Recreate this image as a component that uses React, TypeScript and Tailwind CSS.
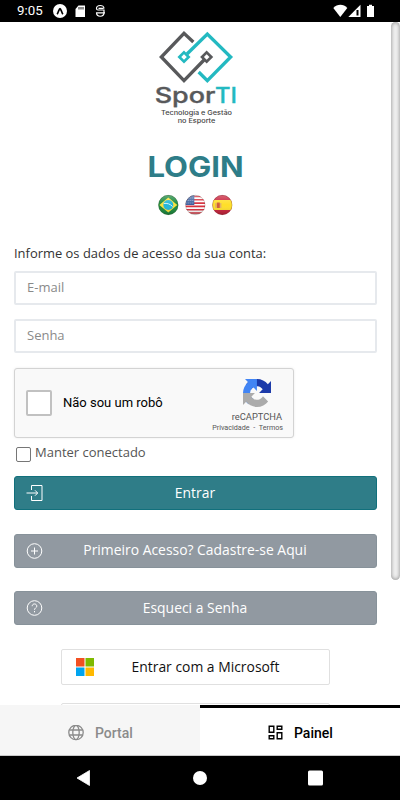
import React from 'react';

const StatusBar: React.FC = () => (
  <header className="flex h-[22px] shrink-0 items-center bg-black pl-[17px] text-white">
    <span className="w-[36px] font-[Roboto] text-[13.300px] leading-none">9:05</span>
    <svg className="h-[22px] w-[54px]" viewBox="0 0 54 22">
      <circle cx="7" cy="11" r="7" fill="#fff" />
      <path d="M4 14.2c1.300-1 2-5.700 3-5.700s1.700 4.700 3 5.700" fill="none" stroke="#000" strokeWidth="1.700" />
      <path d="M25.500 5.500H32V17h-9.500V9z" fill="#fff" />
      <path d="M26 7v2.500M28 7v2.500M30 7v2.500" stroke="#000" strokeWidth="0.900" />
      <path d="M51 8.500c0-4-7.500-4-7.500 0 0 1 .5 1.500 1.500 1.500h6v2.500c0 5-7.500 5-7.500 0M43 12.800h9M45.500 8.300h5" fill="none" stroke="#fff" strokeWidth="1.200" />
    </svg>
    <svg className="ml-auto h-[22px] w-[67px]" viewBox="0 0 67 22">
      <path d="M0.300 8c4-4.300 10.200-4.300 14 0L7.300 17z" fill="#fff" />
      <path d="M27.500 4.800V17H15.300z" fill="#fff" />
      <path d="M23.500 10h2v5.500h-2z" fill="#000" />
      <path d="M34 6h2V4.800h3V6h2v11h-7z" fill="#fff" />
    </svg>
  </header>
);

const Logo: React.FC = () => (
  <svg className="h-[110px] w-[120px]" viewBox="0 0 360 330" fill="none">
    <g strokeWidth="10">
      <path d="M160 54L132 28L64 99L132 170L192 108" stroke="#58595b" />
      <path d="M141 90L202 30L272 99L202 170L176 144" stroke="#23b9c1" />
      <path d="M132 85l14 14-14 14-14-14z" stroke="#23b9c1" strokeWidth="8" />
      <path d="M200 85l14 14-14 14-14-14z" stroke="#58595b" strokeWidth="8" />
    </g>
    <g fontFamily="Inter, sans-serif">
      <text x="44" y="236" fontSize="64" fontWeight="500" fill="#58595b" stroke="#58595b" strokeWidth="1" textLength="182" lengthAdjust="spacingAndGlyphs">Spor</text>
      <text x="225" y="236" fontSize="64" fontWeight="500" fill="#23b9c1" stroke="#23b9c1" strokeWidth="1" textLength="66" lengthAdjust="spacingAndGlyphs">TI</text>
      <text x="63" y="274" fontSize="19" fontWeight="500" fill="#444" textLength="213" lengthAdjust="spacingAndGlyphs">Tecnologia e Gestão</text>
      <text x="113" y="297" fontSize="19" fontWeight="500" fill="#444" textLength="113" lengthAdjust="spacingAndGlyphs">no Esporte</text>
    </g>
  </svg>
);

const Flags: React.FC = () => (
  <svg className="mx-auto h-[22px] w-[76px]" viewBox="0.700 0 76 22">
    <defs>
      <clipPath id="us"><circle cx="38" cy="11" r="10" /></clipPath>
      <clipPath id="es"><circle cx="65" cy="11" r="10" /></clipPath>
      <linearGradient id="shine" x1="0" y1="0" x2="0" y2="1">
        <stop offset="0" stopColor="#fff" stopOpacity="0.300" />
        <stop offset="0.500" stopColor="#fff" stopOpacity="0" />
        <stop offset="1" stopColor="#000" stopOpacity="0.200" />
      </linearGradient>
    </defs>
    <circle cx="11" cy="11" r="10" fill="#17883a" />
    <path d="M11 3.500L20 11l-9 7.500L2 11z" fill="#f9e23b" />
    <circle cx="11" cy="11" r="5" fill="#20b5d8" />
    <path d="M6.500 9.500c3-.6 6.500.5 8.800 3" fill="none" stroke="#d9f3f5" strokeWidth="1" />
    <g clipPath="url(#us)">
      <path d="M28 1h20v20H28z" fill="#fff" />
      <path d="M28 2.500h20M28 5.800h20M28 9.100h20M28 12.400h20M28 15.700h20M28 19h20" stroke="#d62d3a" strokeWidth="1.600" />
      <path d="M28 1h9v10h-9z" fill="#3c5f9d" />
      <path d="M29 4h8M29 6.500h8M29 9h8" stroke="#b4c8e2" strokeWidth="0.700" strokeDasharray="1 1" />
    </g>
    <g clipPath="url(#es)">
      <path d="M55 1h20v20H55z" fill="#c81f38" />
      <path d="M55 6h20v10H55z" fill="#ffdf27" />
      <path d="M58 9h1v5h-1zM63 9h1v5h-1z" fill="#d9a27a" />
      <path d="M59.500 8.500h3v5.500h-3z" fill="#cf5a38" />
    </g>
    {[11, 38, 65].map(cx => (
      <circle key={cx} cx={cx} cy="11" r="9.700" fill="url(#shine)" stroke="#574b3c" strokeOpacity="0.350" strokeWidth="0.700" />
    ))}
  </svg>
);

const Recaptcha: React.FC = () => (
  <div className="mt-[15px] flex h-[70px] w-[280px] items-center rounded-[3px] border border-[#d3d3d3] bg-[#f9f9f9] pl-[11px] shadow-[0_0_3px_rgba(0,0,0,0.08)]">
    <div className="mb-px h-[26px] w-[26px] rounded-[2px] border-2 border-[#c1c1c1] bg-white" />
    <span className="ml-[11px] font-[Roboto] text-[13px] text-black">Não sou um robô</span>
    <div className="mr-[10px] ml-auto flex h-full flex-col items-end pt-[10px] font-[Roboto] text-[#555]">
      <svg className="mr-[12px] h-[28px] w-[28px]" viewBox="0 0 64 64">
        <path d="M64 31.955l-.033-1.370V4.687l-7.160 7.160C50.948 4.674 42.033.093 32.050.093c-10.400 0-19.622 4.960-25.458 12.640l11.736 11.860a15.550 15.550 0 0 1 4.754-5.334c2.050-1.600 4.952-2.906 8.968-2.906.485 0 .860.057 1.135.163 4.976.393 9.288 3.140 11.828 7.124l-8.307 8.307L64 31.953" fill="#1c3aa9" />
        <path d="M31.862.094l-1.370.033H4.594l7.160 7.160C4.580 13.147 0 22.060 0 32.046c0 10.400 4.960 19.622 12.640 25.458L24.500 45.768a15.550 15.550 0 0 1-5.334-4.754c-1.600-2.050-2.906-4.952-2.906-8.968 0-.485.057-.860.163-1.135.393-4.976 3.140-9.288 7.124-11.828l8.307 8.307L31.860.095" fill="#4285f4" />
        <path d="M.001 32.045l.033 1.370v25.898l7.160-7.160c5.860 7.173 14.774 11.754 24.760 11.754 10.400 0 19.622-4.960 25.458-12.640l-11.736-11.860a15.550 15.550 0 0 1-4.754 5.334c-2.050 1.600-4.952 2.906-8.968 2.906-.485 0-.860-.057-1.135-.163-4.976-.393-9.288-3.140-11.828-7.124l8.307-8.307c-10.522.040-22.400.066-27.295-.005" fill="#ababab" />
      </svg>
      <span className="mt-[4px] mr-px text-[9.300px] leading-[11px]">reCAPTCHA</span>
      <span className="mt-px text-[7.200px] leading-[10px]">Privacidade&nbsp; - &nbsp;Termos</span>
    </div>
  </div>
);

interface ActionButtonProps {
  label: string;
  className: string;
  children: React.ReactNode;
}

const ActionButton: React.FC<ActionButtonProps> = ({ label, className, children }) => (
  <button className={`grid h-[34px] w-full grid-cols-[42px_1fr_42px] items-center rounded-[3px] border text-[13.900px] text-white ${className}`}>
    <svg className="ml-[11px] h-[18px] w-[18px]" viewBox="0.500 0 18 18" fill="none" stroke="currentColor">{children}</svg>
    <span className="-ml-px">{label}</span>
  </button>
);

const App: React.FC = () => (
  <div className="flex h-[800px] w-[400px] flex-col overflow-hidden bg-white font-['Open_Sans',sans-serif]">
    <StatusBar />

    <main className="relative min-h-0 flex-1 overflow-hidden pt-[2px] pr-[23px] pl-[14px]">
      <div className="flex justify-center pl-[9px]">
        <Logo />
      </div>
      <h1 className="mt-[15px] h-[36px] scale-x-[1.07] text-center font-[Inter] text-[29px] leading-[36px] font-bold text-[#2e7d88]">LOGIN</h1>
      <div className="mt-[9px]"><Flags /></div>

      <p className="mt-[28px] text-[12.950px] leading-[18px] text-[#333]">Informe os dados de acesso da sua conta:</p>
      <input className="mt-[9px] block h-[34px] w-full rounded-[2px] border-2 border-[#e6e9ed] px-[11px] pb-[3px] text-[13px] placeholder:text-[#8a8a8a]" placeholder="E-mail" />
      <input className="mt-[14px] block h-[34px] w-full rounded-[2px] border-2 border-[#e6e9ed] px-[11px] pb-[3px] text-[13px] placeholder:text-[#8a8a8a]" placeholder="Senha" type="password" />

      <Recaptcha />

      <label className="mt-[5px] flex h-[20px] items-center pl-[2px] text-[13px] text-[#555]">
        <input type="checkbox" className="mt-[3px] mr-[4px] h-[15px] w-[15px] appearance-none rounded-[2px] border border-[#767676] bg-white" />
        Manter conectado
      </label>

      <div className="mt-[13px] flex flex-col gap-[23.500px]">
        <ActionButton label="Entrar" className="border-[#11707c] bg-[#2f7d88]">
          <path d="M6 6V1.500h10.500v15H6V12M1 9h11M9.500 6.300L12.200 9l-2.700 2.700" />
        </ActionButton>
        <ActionButton label="Primeiro Acesso? Cadastre-se Aqui" className="border-[#87929a] bg-[#9199a1]">
          <circle cx="9" cy="9" r="7.300" />
          <path d="M9 5.500v7M5.500 9h7" />
        </ActionButton>
        <ActionButton label="Esqueci a Senha" className="border-[#87929a] bg-[#9199a1]">
          <circle cx="9" cy="9" r="7.300" />
          <path d="M6.700 7.200c0-3 4.600-3 4.600 0 0 1.600-2.300 1.700-2.300 3.600M9 12v1.300" />
        </ActionButton>
      </div>

      <div className="mt-[24px] flex flex-col items-center gap-[18px]">
        <button className="grid h-[36px] w-[269px] grid-cols-[44px_1fr] items-center rounded-[2px] border border-[#e0e0e0] text-[13.900px] text-[#111]">
          <svg className="ml-[14px] h-[18px] w-[18px]" viewBox="0 0 18 18">
            <path d="M0 0h8.500v8.500H0z" fill="#f25022" />
            <path d="M9.500 0H18v8.500H9.500z" fill="#7fba00" />
            <path d="M0 9.500h8.500V18H0z" fill="#00a4ef" />
            <path d="M9.500 9.500H18V18H9.500z" fill="#ffb900" />
          </svg>
          <span className="pr-[26px] pl-[2px]">Entrar com a Microsoft</span>
        </button>
        <div className="h-[36px] w-[269px] rounded-[2px] border border-[#e0e0e0]" />
      </div>

      {/* scrollbar thumb */}
      <div className="absolute top-0 right-0 h-[558px] w-[9px] rounded-full bg-[#f0f0f0] shadow-[inset_0_0_4px_rgba(0,0,0,0.45)]" />
    </main>

    <nav className="flex h-[51px] shrink-0 border-b border-[#c9c9c9] font-[Roboto] text-[14px] font-medium">
      <button className="flex flex-1 items-center bg-[#f6f6f6] pt-[5px] pl-[68px] text-[#8b8b8b]">
        <svg className="h-[16px] w-[16px]" viewBox="0 0.500 16 16" fill="none" stroke="currentColor" strokeWidth="1.300">
          <circle cx="8" cy="8" r="7.200" />
          <ellipse cx="8" cy="8" rx="3.200" ry="7.200" />
          <path d="M1.400 5.500h13.200M1.400 10.500h13.200" />
        </svg>
        <span className="mt-px ml-[11px]">Portal</span>
      </button>
      <button className="flex flex-1 items-center border-t-[3px] border-black bg-white pt-[2px] pl-[68px] text-black">
        <svg className="h-[15px] w-[15px]" viewBox="0 0 15 15" fill="none" stroke="currentColor" strokeWidth="1.400">
          <path d="M1.200 1.200h4.600v6H1.200zM9.200 1.200h4.600v3H9.200zM1.200 10.800h4.600v3H1.200zM9.200 7.800h4.600v6H9.200z" />
        </svg>
        <span className="mt-px ml-[11px]">Painel</span>
      </button>
    </nav>

    <footer className="h-[44px] shrink-0 bg-black">
      <svg className="h-[44px] w-[400px]" viewBox="0 0 400 44" fill="#fff">
        <path d="M77 22L89.500 14.500v15z" stroke="#fff" strokeLinejoin="round" strokeWidth="0.800" />
        <circle cx="200" cy="22" r="7" />
        <rect x="308" y="14.500" width="15" height="15" rx="1.500" />
      </svg>
    </footer>
  </div>
);

export default App;
